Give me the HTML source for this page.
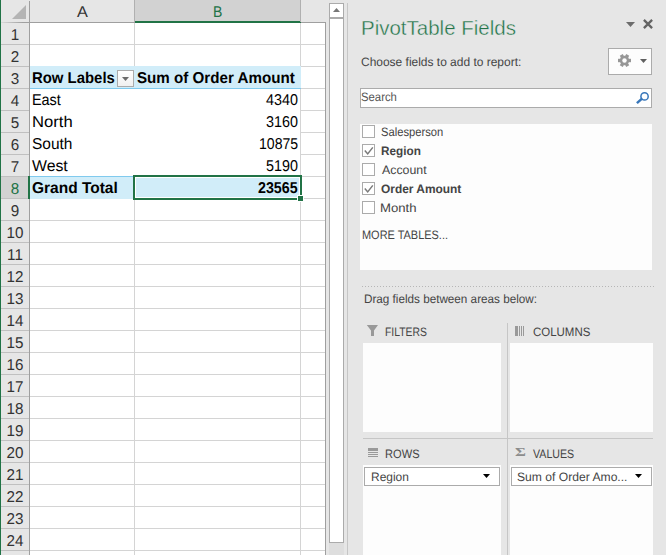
<!DOCTYPE html>
<html><head><meta charset="utf-8"><title>PivotTable</title>
<style>
html,body{margin:0;padding:0}
body{width:666px;height:555px;overflow:hidden;background:#e6e6e6;position:relative;font-family:"Liberation Sans",sans-serif;color:#444}
.abs{position:absolute}
.t{position:absolute;white-space:nowrap;line-height:1;transform-origin:0 0}
.sheet{font-family:"Liberation Sans",sans-serif;color:#000}
.rh{position:absolute;left:1px;width:28px;height:21px;border-bottom:1px solid #c0c0c0}
.rn{position:absolute;left:1px;width:28px;text-align:center;font-size:15.7px;line-height:17px;transform:scaleX(0.97) rotate(0.03deg);color:#333;font-family:"Liberation Sans",sans-serif}
.gl{position:absolute;background:#d4d4d4}
.ui{font-family:"Liberation Sans",sans-serif;color:#444}
</style></head><body>

<div class="abs" style="left:0px;top:0px;width:1px;height:555px;background:#217346;"></div>
<div class="abs" style="left:30px;top:23px;width:295px;height:532px;background:#fff;"></div>
<div class="abs" style="left:135px;top:0px;width:166px;height:21px;background:#d2d2d2;"></div>
<div class="abs" style="left:135px;top:21px;width:166px;height:2px;background:#217346;"></div>
<div class="abs" style="left:30px;top:22px;width:105px;height:1px;background:#9f9f9f;"></div>
<div class="abs" style="left:301px;top:22px;width:25px;height:1px;background:#9f9f9f;"></div>
<div class="abs" style="left:134px;top:0px;width:1px;height:22px;background:#b0b0b0;"></div>
<div class="abs" style="left:300px;top:0px;width:1px;height:22px;background:#b0b0b0;"></div>
<div class="abs" style="left:29px;top:1px;width:1px;height:554px;background:#9f9f9f;"></div>
<div class="abs" style="left:1px;top:22px;width:29px;height:1px;background:linear-gradient(90deg,#dadada,#9f9f9f 75%);"></div>
<svg class="abs" style="left:12px;top:5px" width="14" height="14"><polygon points="14,0 14,14 0,14" fill="#b4b4b4"/></svg>
<div class="t sheet" id="cA" style="left:77.12px;top:3.00px;font-size:15.7px;line-height:17px;transform:scaleX(1.0367) rotate(0.03deg);color:#333;">A</div>
<div class="t sheet" id="cB" style="left:212.87px;top:3.00px;font-size:15.7px;line-height:17px;transform:scaleX(0.8927) rotate(0.03deg);color:#217346;">B</div>
<div class="gl" style="left:30px;top:44px;width:295px;height:1px"></div>
<div class="gl" style="left:30px;top:66px;width:295px;height:1px"></div>
<div class="gl" style="left:30px;top:88px;width:295px;height:1px"></div>
<div class="gl" style="left:30px;top:110px;width:295px;height:1px"></div>
<div class="gl" style="left:30px;top:132px;width:295px;height:1px"></div>
<div class="gl" style="left:30px;top:154px;width:295px;height:1px"></div>
<div class="gl" style="left:30px;top:176px;width:295px;height:1px"></div>
<div class="gl" style="left:30px;top:198px;width:295px;height:1px"></div>
<div class="gl" style="left:30px;top:220px;width:295px;height:1px"></div>
<div class="gl" style="left:30px;top:242px;width:295px;height:1px"></div>
<div class="gl" style="left:30px;top:264px;width:295px;height:1px"></div>
<div class="gl" style="left:30px;top:286px;width:295px;height:1px"></div>
<div class="gl" style="left:30px;top:308px;width:295px;height:1px"></div>
<div class="gl" style="left:30px;top:330px;width:295px;height:1px"></div>
<div class="gl" style="left:30px;top:352px;width:295px;height:1px"></div>
<div class="gl" style="left:30px;top:374px;width:295px;height:1px"></div>
<div class="gl" style="left:30px;top:396px;width:295px;height:1px"></div>
<div class="gl" style="left:30px;top:418px;width:295px;height:1px"></div>
<div class="gl" style="left:30px;top:440px;width:295px;height:1px"></div>
<div class="gl" style="left:30px;top:462px;width:295px;height:1px"></div>
<div class="gl" style="left:30px;top:484px;width:295px;height:1px"></div>
<div class="gl" style="left:30px;top:506px;width:295px;height:1px"></div>
<div class="gl" style="left:30px;top:528px;width:295px;height:1px"></div>
<div class="gl" style="left:30px;top:550px;width:295px;height:1px"></div>
<div class="gl" style="left:134px;top:23px;width:1px;height:532px"></div>
<div class="gl" style="left:300px;top:23px;width:1px;height:532px"></div>
<div class="abs" style="left:325px;top:22px;width:1px;height:533px;background:#9f9f9f;"></div>
<div class="abs" style="left:30px;top:89px;width:270px;height:87px;background:#fff;"></div>
<div class="abs" style="left:30px;top:66px;width:271px;height:22px;background:#d1edf9;"></div>
<div class="abs" style="left:30px;top:88px;width:271px;height:1px;background:#80caee;"></div>
<div class="abs" style="left:30px;top:177px;width:271px;height:22px;background:#d1edf9;"></div>
<div class="abs" style="left:30px;top:176px;width:271px;height:1px;background:#80caee;"></div>
<div class="rh" style="top:23px"></div>
<div class="rn" style="top:26px">1</div>
<div class="rh" style="top:45px"></div>
<div class="rn" style="top:48px">2</div>
<div class="rh" style="top:67px"></div>
<div class="rn" style="top:70px">3</div>
<div class="rh" style="top:89px"></div>
<div class="rn" style="top:92px">4</div>
<div class="rh" style="top:111px"></div>
<div class="rn" style="top:114px">5</div>
<div class="rh" style="top:133px"></div>
<div class="rn" style="top:136px">6</div>
<div class="rh" style="top:155px"></div>
<div class="rn" style="top:158px">7</div>
<div class="rh" style="top:177px;background:#d2d2d2;width:27px"></div>
<div class="abs" style="left:28px;top:176px;width:2px;height:23px;background:#217346;"></div>
<div class="rn" style="top:180px;color:#217346">8</div>
<div class="rh" style="top:199px"></div>
<div class="rn" style="top:202px">9</div>
<div class="rh" style="top:221px"></div>
<div class="rn" style="top:224px">10</div>
<div class="rh" style="top:243px"></div>
<div class="rn" style="top:246px">11</div>
<div class="rh" style="top:265px"></div>
<div class="rn" style="top:268px">12</div>
<div class="rh" style="top:287px"></div>
<div class="rn" style="top:290px">13</div>
<div class="rh" style="top:309px"></div>
<div class="rn" style="top:312px">14</div>
<div class="rh" style="top:331px"></div>
<div class="rn" style="top:334px">15</div>
<div class="rh" style="top:353px"></div>
<div class="rn" style="top:356px">16</div>
<div class="rh" style="top:375px"></div>
<div class="rn" style="top:378px">17</div>
<div class="rh" style="top:397px"></div>
<div class="rn" style="top:400px">18</div>
<div class="rh" style="top:419px"></div>
<div class="rn" style="top:422px">19</div>
<div class="rh" style="top:441px"></div>
<div class="rn" style="top:444px">20</div>
<div class="rh" style="top:463px"></div>
<div class="rn" style="top:466px">21</div>
<div class="rh" style="top:485px"></div>
<div class="rn" style="top:488px">22</div>
<div class="rh" style="top:507px"></div>
<div class="rn" style="top:510px">23</div>
<div class="rh" style="top:529px"></div>
<div class="rn" style="top:532px">24</div>
<div class="t sheet" id="rl" style="left:32.00px;top:69.00px;font-size:15.7px;line-height:17px;transform:scaleX(0.9504) rotate(0.03deg);font-weight:bold;">Row Labels</div>
<div class="abs" style="left:117px;top:70px;width:15px;height:15px;border:1px solid #ababab;background:linear-gradient(#fff,#f0f0f0)"></div>
<svg class="abs" style="left:122px;top:77px" width="7" height="4"><polygon points="0,0 7,0 3.5,4" fill="#6a6a6a"/></svg>
<div class="t sheet" id="so" style="left:137.08px;top:69.00px;font-size:15.7px;line-height:17px;transform:scaleX(0.9663) rotate(0.03deg);font-weight:bold;">Sum of Order Amount</div>
<div class="t sheet" id="l0" style="left:32.16px;top:91.00px;font-size:15.7px;line-height:17px;transform:scaleX(0.9185) rotate(0.03deg);">East</div>
<div class="t sheet" id="v0" style="left:265.50px;top:91.00px;font-size:15.7px;line-height:17px;transform:scaleX(0.9155) rotate(0.03deg);">4340</div>
<div class="t sheet" id="l1" style="left:31.96px;top:113.00px;font-size:15.7px;line-height:17px;transform:scaleX(1.0600) rotate(0.03deg);">North</div>
<div class="t sheet" id="v1" style="left:265.50px;top:113.00px;font-size:15.7px;line-height:17px;transform:scaleX(0.9155) rotate(0.03deg);">3160</div>
<div class="t sheet" id="l2" style="left:31.84px;top:135.00px;font-size:15.7px;line-height:17px;transform:scaleX(0.9855) rotate(0.03deg);">South</div>
<div class="t sheet" id="v2" style="left:259.30px;top:135.00px;font-size:15.7px;line-height:17px;transform:scaleX(0.8971) rotate(0.03deg);">10875</div>
<div class="t sheet" id="l3" style="left:32.11px;top:157.00px;font-size:15.7px;line-height:17px;transform:scaleX(1.0083) rotate(0.03deg);">West</div>
<div class="t sheet" id="v3" style="left:265.50px;top:157.00px;font-size:15.7px;line-height:17px;transform:scaleX(0.9155) rotate(0.03deg);">5190</div>
<div class="t sheet" id="gt" style="left:31.77px;top:179.00px;font-size:15.7px;line-height:17px;transform:scaleX(0.9878) rotate(0.03deg);font-weight:bold;">Grand Total</div>
<div class="t sheet" id="gv" style="left:258.31px;top:179.00px;font-size:15.7px;line-height:17px;transform:scaleX(0.9096) rotate(0.03deg);font-weight:bold;">23565</div>
<div class="abs" style="left:133px;top:175px;width:165px;height:21px;border:2px solid #217346;box-shadow:inset 0 0 0 1px #fff"></div>
<div class="abs" style="left:297px;top:195px;width:7px;height:7px;background:#fff;"></div>
<div class="abs" style="left:298px;top:196px;width:5px;height:5px;background:#217346;"></div>
<div class="abs" style="left:329px;top:3px;width:13px;height:13px;border:1px solid #ababab;background:#fff"></div>
<svg class="abs" style="left:333px;top:8px" width="7" height="4"><polygon points="0,4 7,4 3.5,0" fill="#777"/></svg>
<div class="abs" style="left:329px;top:18px;width:13px;height:523px;border:1px solid #ababab;background:#fff"></div>
<div class="abs" style="left:329px;top:543px;width:15px;height:12px;background:#dedede;"></div>
<div class="abs" style="left:347px;top:3px;width:1px;height:552px;background:#c6c6c6;"></div>
<div class="t ui" id="ttl" style="left:361.13px;top:16.00px;font-size:21px;line-height:23px;transform:scaleX(0.9760);color:#217346;-webkit-text-stroke:0.4px #e6e6e6;">PivotTable Fields</div>
<svg class="abs" style="left:626px;top:22px" width="9" height="5"><polygon points="0,0 9,0 4.5,5" fill="#6c6c6c"/></svg>
<svg class="abs" style="left:643px;top:19px" width="10" height="10"><path d="M0.9 0.9L9.1 9.1M9.1 0.9L0.9 9.1" stroke="#636363" stroke-width="2.3" fill="none"/></svg>
<div class="t ui" id="ch" style="left:361.31px;top:55.00px;font-size:12.2px;line-height:14px;transform:scaleX(0.9817) rotate(0.03deg);">Choose fields to add to report:</div>
<div class="abs" style="left:608px;top:48px;width:42px;height:25px;border:1px solid #ababab;background:#fdfdfd"></div>
<svg class="abs" style="left:618px;top:54px" width="13" height="13" viewBox="-6.5 -6.5 13 13"><g fill="#979797"><rect x="-1.7" y="-6.5" width="3.4" height="13" transform="rotate(90)"/><rect x="-1.7" y="-6.5" width="3.4" height="13" transform="rotate(30)"/><rect x="-1.7" y="-6.5" width="3.4" height="13" transform="rotate(150)"/><circle r="4.7"/></g><circle r="2.2" fill="#fdfdfd"/></svg>
<svg class="abs" style="left:640px;top:59px" width="7" height="4"><polygon points="0,0 7,0 3.5,4" fill="#606060"/></svg>
<div class="abs" style="left:360px;top:88px;width:290px;height:18px;border:1px solid #ababab;background:#fff"></div>
<div class="t ui" id="se" style="left:361.30px;top:90.00px;font-size:12.2px;line-height:14px;transform:scaleX(0.9300) rotate(0.03deg);color:#555;">Search</div>
<svg class="abs" style="left:635px;top:91px" width="15" height="15" viewBox="0 0 15 15"><circle cx="9.55" cy="5.4" r="3.65" fill="none" stroke="#3877ba" stroke-width="1.5"/><path d="M7 7.6L1.9 12.1" stroke="#3877ba" stroke-width="2.5"/></svg>
<div class="abs" style="left:360px;top:124px;width:292px;height:146px;background:#fdfdfd;"></div>
<div class="abs" style="left:362px;top:125px;width:11px;height:11px;border:1px solid #ababab;background:#fff"></div>
<div class="t ui" id="f0" style="left:381.36px;top:125.00px;font-size:12.2px;line-height:14px;transform:scaleX(0.9182) rotate(0.03deg);">Salesperson</div>
<div class="abs" style="left:362px;top:144px;width:11px;height:11px;border:1px solid #ababab;background:#fff"></div>
<svg class="abs" style="left:364px;top:146px" width="10" height="10" viewBox="0 0 10 10"><path d="M0.8 4.6L3.7 7.9L8.8 1.4" stroke="#7a7a7a" stroke-width="1.5" fill="none"/></svg>
<div class="t ui" id="f1" style="left:381.37px;top:144.00px;font-size:12.2px;line-height:14px;transform:scaleX(0.9643) rotate(0.03deg);font-weight:bold;">Region</div>
<div class="abs" style="left:362px;top:163px;width:11px;height:11px;border:1px solid #ababab;background:#fff"></div>
<div class="t ui" id="f2" style="left:381.86px;top:163.00px;font-size:12.2px;line-height:14px;transform:scaleX(1.0130) rotate(0.03deg);">Account</div>
<div class="abs" style="left:362px;top:182px;width:11px;height:11px;border:1px solid #ababab;background:#fff"></div>
<svg class="abs" style="left:364px;top:184px" width="10" height="10" viewBox="0 0 10 10"><path d="M0.8 4.6L3.7 7.9L8.8 1.4" stroke="#7a7a7a" stroke-width="1.5" fill="none"/></svg>
<div class="t ui" id="f3" style="left:380.53px;top:182.00px;font-size:12.2px;line-height:14px;transform:scaleX(0.9780) rotate(0.03deg);font-weight:bold;">Order Amount</div>
<div class="abs" style="left:362px;top:201px;width:11px;height:11px;border:1px solid #ababab;background:#fff"></div>
<div class="t ui" id="f4" style="left:380.30px;top:201.00px;font-size:12.2px;line-height:14px;transform:scaleX(1.0781) rotate(0.03deg);">Month</div>
<div class="t ui" id="mt" style="left:361.94px;top:228.00px;font-size:12.2px;line-height:14px;transform:scaleX(0.8982) rotate(0.03deg);">MORE TABLES...</div>
<div class="abs" style="left:362px;top:286px;width:292px;height:1px;background:repeating-linear-gradient(90deg,#b6b6b6 0,#b6b6b6 1px,transparent 1px,transparent 3px)"></div>
<div class="t ui" id="dr" style="left:363.59px;top:292.00px;font-size:12.2px;line-height:14px;transform:scaleX(0.9597) rotate(0.03deg);">Drag fields between areas below:</div>
<svg class="abs" style="left:366px;top:325px" width="13" height="12" viewBox="0 0 13 12"><path d="M0.8 0H12L8 5.6V11H5V5.6Z" fill="#999"/></svg>
<div class="t ui" id="fi" style="left:385.10px;top:325.00px;font-size:12.2px;line-height:14px;transform:scaleX(0.8532) rotate(0.03deg);">FILTERS</div>
<div class="abs" style="left:363px;top:343px;width:138px;height:89px;background:#fdfdfd;"></div>
<div class="abs" style="left:507px;top:323px;width:1px;height:232px;background:#c6c6c6;"></div>
<svg class="abs" style="left:515px;top:326px" width="10" height="10" viewBox="0 0 10 10"><rect x="0" y="0" width="3" height="10" fill="#999"/><rect x="4" y="0" width="1" height="10" fill="#999"/><rect x="6" y="0" width="1" height="10" fill="#999"/><rect x="8" y="0" width="1" height="10" fill="#999"/></svg>
<div class="t ui" id="co" style="left:532.94px;top:325.00px;font-size:12.2px;line-height:14px;transform:scaleX(0.9412) rotate(0.03deg);">COLUMNS</div>
<div class="abs" style="left:510px;top:343px;width:143px;height:89px;background:#fdfdfd;"></div>
<div class="abs" style="left:363px;top:438px;width:290px;height:1px;background:#c6c6c6;"></div>
<svg class="abs" style="left:368px;top:448px" width="10" height="10" viewBox="0 0 10 10"><rect x="0" y="0" width="10" height="3" fill="#999"/><rect x="0" y="4" width="10" height="1" fill="#999"/><rect x="0" y="6" width="10" height="1" fill="#999"/><rect x="0" y="8" width="10" height="1" fill="#999"/></svg>
<div class="t ui" id="ro" style="left:384.52px;top:447.00px;font-size:12.2px;line-height:14px;transform:scaleX(0.9115) rotate(0.03deg);">ROWS</div>
<div class="abs" style="left:363px;top:465px;width:138px;height:90px;background:#fdfdfd;"></div>
<div class="abs" style="left:364px;top:467px;width:134px;height:17px;border:1px solid #ababab;background:#fff"></div>
<div class="t ui" id="rg" style="left:370.52px;top:470.00px;font-size:12.2px;line-height:14px;transform:scaleX(0.9817) rotate(0.03deg);">Region</div>
<svg class="abs" style="left:483px;top:474px" width="7" height="4"><polygon points="0,0 7,0 3.5,4" fill="#000"/></svg>
<div class="t ui" id="sg" style="left:514.55px;top:444.00px;font-size:13.5px;line-height:15px;transform:scaleX(1.2303);color:#8c8c8c;font-weight:bold;font-family:'Liberation Serif',serif;">Σ</div>
<div class="t ui" id="va" style="left:532.84px;top:447.00px;font-size:12.2px;line-height:14px;transform:scaleX(0.8732) rotate(0.03deg);">VALUES</div>
<div class="abs" style="left:510px;top:465px;width:143px;height:90px;background:#fdfdfd;"></div>
<div class="abs" style="left:511px;top:467px;width:139px;height:17px;border:1px solid #ababab;background:#fff"></div>
<div class="t ui" id="sv" style="left:517.26px;top:470.00px;font-size:12.2px;line-height:14px;transform:scaleX(0.9946) rotate(0.03deg);">Sum of Order Amo...</div>
<svg class="abs" style="left:635px;top:474px" width="7" height="4"><polygon points="0,0 7,0 3.5,4" fill="#000"/></svg>
</body></html>
